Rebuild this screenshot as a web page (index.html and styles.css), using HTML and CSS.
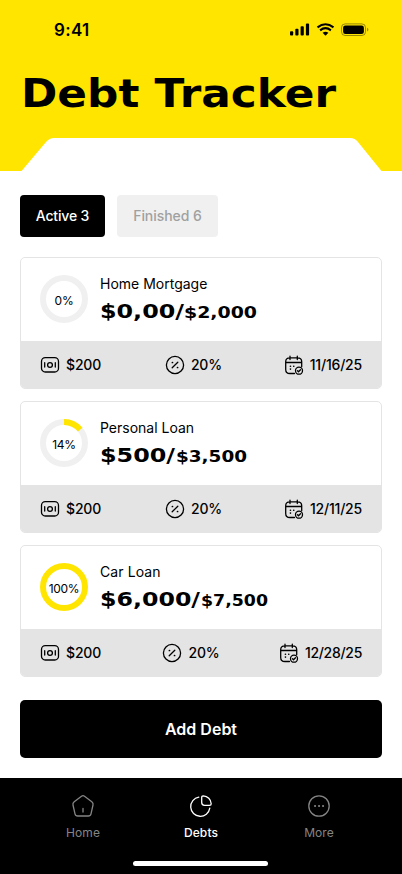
FILE: index.html
```html
<!DOCTYPE html>
<html lang="en">
<head>
<meta charset="utf-8">
<meta name="viewport" content="width=device-width, initial-scale=1">
<title>Debt Tracker</title>
<link rel="stylesheet" href="styles.css">
</head>
<body>
<svg class="defs" width="0" height="0" aria-hidden="true">
  <symbol id="cash" viewBox="0 0 20 20">
    <rect x="1.5" y="2.6" width="17" height="14.4" rx="3.8"/>
    <circle cx="10" cy="10" r="2.4"/>
    <path d="M4.7 7.7v4.4M15.3 7.7v4.4"/>
  </symbol>
  <symbol id="percent" viewBox="0 0 20 20">
    <circle cx="10" cy="10" r="8.6"/>
    <path d="M7.2 12.8l5.6-5.6"/>
    <path d="M7.4 7.5h.1M12.5 12.5h.1" stroke-width="1.7"/>
  </symbol>
  <symbol id="calendar" viewBox="0 0 20 20">
    <path d="M10.5 18.5H5.8Q1.7 18.5 1.7 14.4V6.8Q1.7 2.9 5.8 2.9h7.8q4.1 0 4.1 3.9v5M1.9 7.5h15.6M6 1.2v3.3M13.3 1.2v3.3"/>
    <path d="M6.4 11.2h.1M9.7 11.2h.1M6.4 14.1h.1" stroke-width="1.6"/>
    <circle cx="15" cy="15.7" r="3.5"/>
    <path d="M13.5 15.8l1 1 2-2.1"/>
  </symbol>
</svg>

<header class="hero">
  <div class="status">
    <span class="time">9:41</span>
    <svg class="status-icons" width="82" height="14" viewBox="0 0 82 14">
      <rect x="1" y="8.3" width="3.2" height="4.2" rx=".9"/>
      <rect x="6.3" y="5.8" width="3.2" height="6.7" rx=".9"/>
      <rect x="11.6" y="3.2" width="3.2" height="9.3" rx=".9"/>
      <rect x="16.9" y=".5" width="3.2" height="12" rx=".9"/>
      <path class="wave" d="M28.5 4.4Q36.5-1.9 44.5 4.4M31.1 7.3Q36.5 3.1 41.9 7.3"/>
      <path d="M33.6 9.8Q36.5 7.8 39.4 9.8L36.5 12.8z"/>
      <rect class="shell" x="52.5" y=".9" width="24" height="11.6" rx="3.6"/>
      <rect x="54.1" y="2.4" width="20.8" height="8.7" rx="2.3"/>
      <path d="M78 4.8v3.8q1.4-.7 1.4-1.9T78 4.8z" opacity=".4"/>
    </svg>
  </div>
  <h1 class="title">
    <svg width="340" height="60"><text x="0" y="37.5" textLength="315" lengthAdjust="spacingAndGlyphs">Debt Tracker</text></svg>
  </h1>
  <svg class="notch" width="402" height="33" viewBox="0 0 402 33">
    <path d="M21.5 33L46 4Q49.5 0 54 0H350Q355 0 358 4L381.5 33z"/>
  </svg>
</header>

<main class="content">
  <div class="tabs">
    <button class="tab tab-active">Active 3</button>
    <button class="tab tab-finished">Finished 6</button>
  </div>

  <section class="cards">
    <article class="card">
      <div class="summary">
        <div class="ring">
          <svg width="48" height="48" viewBox="0 0 48 48"><circle class="track" cx="24" cy="24" r="21"/></svg>
          <span>0%</span>
        </div>
        <div class="info">
          <h2 class="name name-home">Home Mortgage</h2>
          <svg class="amount" width="200" height="24"><text class="paid" x="0" y="19" textLength="84" lengthAdjust="spacingAndGlyphs">$0,00/</text><text class="total" x="84" y="19" textLength="73" lengthAdjust="spacingAndGlyphs">$2,000</text></svg>
        </div>
      </div>
      <ul class="facts">
        <li><svg><use href="#cash"/></svg><span>$200</span></li>
        <li class="rate"><svg><use href="#percent"/></svg><span>20%</span></li>
        <li class="date"><svg><use href="#calendar"/></svg><span>11/16/25</span></li>
      </ul>
    </article>

    <article class="card">
      <div class="summary">
        <div class="ring">
          <svg width="48" height="48" viewBox="0 0 48 48"><circle class="track" cx="24" cy="24" r="21"/><circle class="value" cx="24" cy="24" r="21" pathLength="100" stroke-dasharray="14 100"/></svg>
          <span>14%</span>
        </div>
        <div class="info">
          <h2 class="name">Personal Loan</h2>
          <svg class="amount" width="200" height="24"><text class="paid" x="0" y="19" textLength="75" lengthAdjust="spacingAndGlyphs">$500/</text><text class="total" x="76" y="19" textLength="71" lengthAdjust="spacingAndGlyphs">$3,500</text></svg>
        </div>
      </div>
      <ul class="facts">
        <li><svg><use href="#cash"/></svg><span>$200</span></li>
        <li class="rate"><svg><use href="#percent"/></svg><span>20%</span></li>
        <li class="date"><svg><use href="#calendar"/></svg><span>12/11/25</span></li>
      </ul>
    </article>

    <article class="card">
      <div class="summary">
        <div class="ring">
          <svg width="48" height="48" viewBox="0 0 48 48"><circle class="value" cx="24" cy="24" r="21"/></svg>
          <span>100%</span>
        </div>
        <div class="info">
          <h2 class="name name-car">Car Loan</h2>
          <svg class="amount" width="200" height="24"><text class="paid" x="0" y="19" textLength="100" lengthAdjust="spacingAndGlyphs">$6,000/</text><text class="total" x="101" y="19" textLength="67" lengthAdjust="spacingAndGlyphs">$7,500</text></svg>
        </div>
      </div>
      <ul class="facts">
        <li><svg><use href="#cash"/></svg><span>$200</span></li>
        <li class="rate"><svg><use href="#percent"/></svg><span>20%</span></li>
        <li class="date date-wide"><svg><use href="#calendar"/></svg><span>12/28/25</span></li>
      </ul>
    </article>
  </section>

  <button class="add">Add Debt</button>
</main>

<nav class="nav">
  <div class="links">
    <a class="link">
      <svg width="24" height="24" viewBox="0 0 24 24"><path d="M10.5 2.2Q12 1.1 13.5 2.2L20.8 7.7Q22.5 9 22 11L20 19.8Q19.5 22 17.3 22H6.7Q4.5 22 4 19.8L2 11Q1.5 9 3.2 7.7zM12 14.5v3.5"/></svg>
      <span>Home</span>
    </a>
    <a class="link current">
      <svg width="24" height="24" viewBox="0 0 24 24"><path d="M9.8 3.2A9.6 9.6 0 1 0 20.8 14.2M12.7 3.5Q12.7 1.8 14.3 1.8A8.3 8.3 0 0 1 22.2 9.8Q22.2 11.4 20.5 11.4H15.5Q12.7 11.4 12.7 8.6z"/></svg>
      <span>Debts</span>
    </a>
    <a class="link">
      <svg width="24" height="24" viewBox="0 0 24 24"><circle cx="12" cy="12" r="10.2"/><path d="M8 12h.1M12 12h.1M16 12h.1" stroke-width="2"/></svg>
      <span>More</span>
    </a>
  </div>
  <div class="indicator"></div>
</nav>
</body>
</html>
```
FILE: styles.css
```css
* {
  box-sizing: border-box;
}

body {
  margin: 0;
  width: 402px;
  height: 874px;
  display: flex;
  flex-direction: column;
  overflow: hidden;
  background: #fff;
  color: #000;
  font-family: Inter, "Liberation Sans", sans-serif;
}

.defs {
  position: absolute;
}

svg {
  display: block;
  flex: none;
}

h1, h2, ul {
  margin: 0;
  padding: 0;
}

button {
  border: 0;
  padding: 0;
  font-family: inherit;
}

.hero {
  height: 171px;
  display: flex;
  flex-direction: column;
  justify-content: space-between;
  background: #ffe500;
}

.status {
  display: flex;
  justify-content: space-between;
  align-items: center;
  height: 59px;
  padding: 0 31px 0 54px;
}

.time {
  font-size: 17px;
  font-weight: 600;
  letter-spacing: .3px;
}

.wave {
  fill: none;
  stroke: #000;
  stroke-width: 2.1;
}

.shell {
  fill: none;
  stroke: #000;
  opacity: .4;
}

.title {
  height: 60px;
  padding-left: 21px;
}

.title text {
  font: bold 39px "DejaVu Sans", sans-serif;
}

.notch {
  fill: #fff;
}

.content {
  flex: 1;
  display: flex;
  flex-direction: column;
  padding: 24px 20px 20px;
}

.tabs {
  display: flex;
  gap: 12px;
}

.tab {
  height: 42px;
  padding-bottom: 1px;
  border-radius: 4px;
  font-size: 14px;
  font-weight: 450;
}

.tab-active {
  width: 85px;
  background: #000;
  color: #fff;
  letter-spacing: -.15px;
}

.tab-finished {
  width: 101px;
  background: #f0f0f0;
  color: #a0a0a0;
  letter-spacing: -.05px;
}

.cards {
  display: flex;
  flex-direction: column;
  gap: 12px;
  margin-top: 20px;
}

.card {
  height: 132px;
  border: 1px solid #e4e4e4;
  border-radius: 5px;
  overflow: hidden;
}

.summary {
  display: flex;
  gap: 12px;
  height: 83px;
  padding: 17px 19px;
}

.ring {
  display: grid;
  width: 48px;
  height: 48px;
}

.ring > * {
  grid-area: 1 / 1;
}

.ring span {
  place-self: center;
  padding-top: 2px;
  font-size: 12px;
  letter-spacing: -.3px;
}

.ring circle {
  fill: none;
  stroke-width: 6;
}

.ring svg {
  transform: rotate(-90deg);
}

.track {
  stroke: #f0f0f0;
}

.value {
  stroke: #ffe500;
}

.name {
  height: 18px;
  font-size: 14px;
  line-height: 18px;
  font-weight: 400;
}

.name-home {
  letter-spacing: 0;
}

.name-car {
  letter-spacing: .1px;
}

.amount {
  margin-top: 6px;
}

.paid,
.total {
  font: bold 20px "DejaVu Sans", sans-serif;
}

.total {
  font-size: 16px;
}

.facts {
  display: flex;
  justify-content: space-between;
  align-items: center;
  height: 48px;
  padding: 0 19px;
  background: #e4e4e4;
  list-style: none;
}

.facts li {
  display: flex;
  align-items: center;
  gap: 6px;
  font-size: 14px;
  font-weight: 450;
  letter-spacing: -.15px;
}

.facts span {
  padding-bottom: 1px;
}

.facts svg {
  width: 20px;
  height: 20px;
}

.facts svg,
.link svg {
  fill: none;
  stroke: currentColor;
  stroke-width: 1.3;
  stroke-linecap: round;
  stroke-linejoin: round;
}

.facts .rate {
  padding-left: 2px;
}

.facts .date {
  letter-spacing: -.2px;
}

.facts .date-wide {
  letter-spacing: -.3px;
}

.add {
  height: 58px;
  margin-top: 23px;
  border-radius: 5px;
  background: #000;
  color: #fff;
  font-size: 16px;
  font-weight: 600;
}

.nav {
  display: flex;
  flex-direction: column;
  justify-content: space-between;
  align-items: center;
  height: 96px;
  padding: 16px 24px 8px;
  background: #000;
}

.links {
  display: flex;
  width: 100%;
}

.link {
  flex: 1;
  display: flex;
  flex-direction: column;
  align-items: center;
  gap: 7px;
  color: #858585;
  font-size: 12px;
  line-height: 15px;
  letter-spacing: .1px;
}

.current {
  color: #fff;
  font-weight: 500;
}

.indicator {
  width: 135px;
  height: 5px;
  margin-right: 1px;
  border-radius: 3px;
  background: #fff;
}
```
